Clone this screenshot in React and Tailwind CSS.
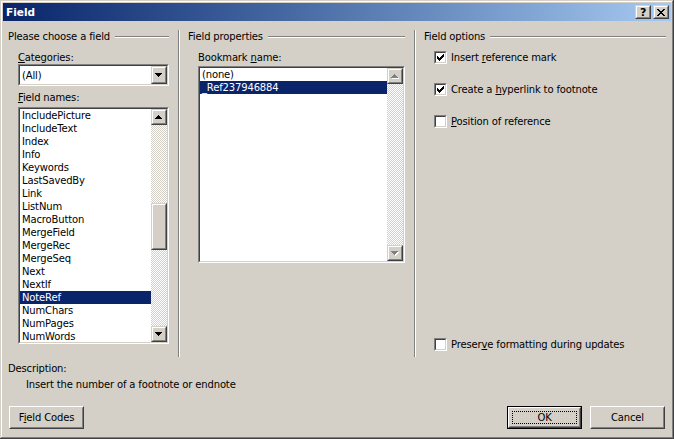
import React from "react";

function Tri({ down = false, disabled = false }) {
  const rows = [1, 3, 5, 7];
  return (
    <svg width="8" height="5" shapeRendering="crispEdges" className="block">
      {disabled &&
        rows.map((w, i) => (
          <rect key={"s" + i} x={(7 - w) / 2 + 1} y={(down ? 3 - i : i) + 1} width={w} height="1" fill="#ffffff" />
        ))}
      {rows.map((w, i) => (
        <rect key={i} x={(7 - w) / 2} y={down ? 3 - i : i} width={w} height="1" fill={disabled ? "#808080" : "#000000"} />
      ))}
    </svg>
  );
}

function RaisedSmall({ className = "", children }) {
  return (
    <div className={`bg-[#d4d0c8] border border-t-[#d4d0c8] border-l-[#d4d0c8] border-r-[#404040] border-b-[#404040] ${className}`}>
      <div className="w-full h-full border border-t-white border-l-white border-r-[#808080] border-b-[#808080] flex items-center justify-center">
        {children}
      </div>
    </div>
  );
}

function Sunken({ className = "", children }) {
  return (
    <div className={`border border-t-[#808080] border-l-[#808080] border-r-white border-b-white ${className}`}>
      <div className="w-full h-full border border-t-[#404040] border-l-[#404040] border-r-[#d4d0c8] border-b-[#d4d0c8] bg-white flex overflow-hidden">
        {children}
      </div>
    </div>
  );
}

function Track({ className = "" }) {
  return (
    <div className={`bg-[repeating-conic-gradient(#ffffff_0_25%,#d4d0c8_0_50%)] bg-[length:2px_2px] ${className}`} />
  );
}

function GroupHeader({ title, pl, pr }) {
  return (
    <div className={`flex items-center h-[13px] ${pl} ${pr}`}>
      <span className="whitespace-nowrap">{title}</span>
      <div className="flex-1 ml-[5px] h-[2px] border-t border-t-[#808080] border-b border-b-white" />
    </div>
  );
}

function Check({ checked }) {
  return (
    <div className="w-[13px] h-[13px] shrink-0 border border-t-[#808080] border-l-[#808080] border-r-white border-b-white">
      <div className="w-full h-full border border-t-[#404040] border-l-[#404040] border-r-[#d4d0c8] border-b-[#d4d0c8] bg-white flex items-center justify-center">
        {checked && (
          <svg width="7" height="7" shapeRendering="crispEdges" className="block">
            <path
              fill="#000"
              d="M6 0h1v3h-1zM5 1h1v3h-1zM4 2h1v3h-1zM3 3h1v3h-1zM2 4h1v3h-1zM1 3h1v3h-1zM0 2h1v3h-1z"
            />
          </svg>
        )}
      </div>
    </div>
  );
}

function PushButton({ children, isDefault = false, className = "" }) {
  const inner = (
    <div className="w-full h-full border border-t-white border-l-white border-r-[#404040] border-b-[#404040]">
      <div className="w-full h-full border border-t-[#d4d0c8] border-l-[#d4d0c8] border-r-[#808080] border-b-[#808080] flex items-center justify-center p-[2px]">
        {isDefault ? (
          <div className="w-full h-full border border-dotted border-black flex items-center justify-center">{children}</div>
        ) : (
          children
        )}
      </div>
    </div>
  );
  return (
    <div className={`w-[75px] h-[23px] bg-[#d4d0c8] ${isDefault ? "border border-black" : ""} ${className}`}>{inner}</div>
  );
}

const fieldNames = [
  "IncludePicture",
  "IncludeText",
  "Index",
  "Info",
  "Keywords",
  "LastSavedBy",
  "Link",
  "ListNum",
  "MacroButton",
  "MergeField",
  "MergeRec",
  "MergeSeq",
  "Next",
  "NextIf",
  "NoteRef",
  "NumChars",
  "NumPages",
  "NumWords",
];

function ListRow({ text, selected }) {
  return (
    <div
      className={`h-[13px] shrink-0 pl-[2px] whitespace-nowrap ${selected ? "bg-[#0a246a] text-white" : "text-black"}`}
    >
      {text}
    </div>
  );
}

export default function App() {
  return (
    <div className="w-[674px] h-[439px] bg-[#d4d0c8] p-[3px] flex flex-col text-[10px] leading-[13px] tracking-[-0.15px] text-black font-['DejaVu_Sans',sans-serif] shadow-[inset_-1px_-1px_#404040,inset_1px_1px_#d4d0c8,inset_-2px_-2px_#808080,inset_2px_2px_#ffffff] overflow-hidden">
      {/* Title bar */}
      <div className="h-[18px] shrink-0 flex items-center bg-linear-to-r from-[#0a246a] to-[#a6caf0] pl-[3px] pr-[2px]">
        <span className="text-white font-bold text-[10.5px] tracking-[0px]">Field</span>
        <div className="ml-auto flex gap-[2px]">
          <RaisedSmall className="w-[16px] h-[14px]">
            <span className="font-bold text-[11px] leading-[11px] text-black">?</span>
          </RaisedSmall>
          <RaisedSmall className="w-[16px] h-[14px]">
            <svg width="8" height="7" shapeRendering="crispEdges" className="block">
              <path
                fill="#000"
                d="M0 0h2v1h-2zM6 0h2v1h-2zM1 1h2v1h-2zM5 1h2v1h-2zM2 2h4v1h-4zM3 3h2v1h-2zM2 4h4v1h-4zM1 5h2v1h-2zM5 5h2v1h-2zM0 6h2v1h-2zM6 6h2v1h-2z"
              />
            </svg>
          </RaisedSmall>
        </div>
      </div>

      {/* Main area */}
      <div className="h-[337px] shrink-0 flex">
        {/* Left column */}
        <div className="w-[175px] pt-[9px] flex flex-col">
          <GroupHeader title="Please choose a field" pl="pl-[5px]" pr="pr-[9px]" />
          <div className="mt-[8px] pl-[15px] h-[13px]">
            <u>C</u>ategories:
          </div>
          <Sunken className="ml-[15px] w-[151px] h-[22px]">
            <div className="flex-1 pl-[2px] flex items-center">(All)</div>
            <RaisedSmall className="w-[16px] h-[18px]">
              <Tri down />
            </RaisedSmall>
          </Sunken>
          <div className="mt-[5px] pl-[15px] h-[13px]">
            <u>F</u>ield names:
          </div>
          <Sunken className="mt-[3px] ml-[15px] w-[151px] h-[237px]">
            <div className="flex-1 flex flex-col overflow-hidden">
              {fieldNames.map((n) => (
                <ListRow key={n} text={n} selected={n === "NoteRef"} />
              ))}
            </div>
            <div className="w-[16px] flex flex-col">
              <RaisedSmall className="w-[16px] h-[16px] shrink-0">
                <Tri />
              </RaisedSmall>
              <Track className="h-[78px] shrink-0" />
              <RaisedSmall className="w-[16px] h-[47px] shrink-0" />
              <Track className="flex-1" />
              <RaisedSmall className="w-[16px] h-[16px] shrink-0">
                <Tri down />
              </RaisedSmall>
            </div>
          </Sunken>
        </div>

        {/* Separator */}
        <div className="mt-[9px] h-[327px] w-[2px] border-l border-l-[#808080] border-r border-r-white" />

        {/* Middle column */}
        <div className="w-[234px] pt-[9px] flex flex-col">
          <GroupHeader title="Field properties" pl="pl-[8px]" pr="pr-[9px]" />
          <div className="mt-[8px] pl-[18px] h-[13px]">
            Bookmark <u>n</u>ame:
          </div>
          <Sunken className="mt-[2px] ml-[18px] w-[207px] h-[197px]">
            <div className="flex-1 flex flex-col overflow-hidden">
              <ListRow text="(none)" />
              <ListRow text="_Ref237946884" selected />
            </div>
            <div className="w-[16px] flex flex-col">
              <RaisedSmall className="w-[16px] h-[16px] shrink-0">
                <Tri disabled />
              </RaisedSmall>
              <Track className="flex-1" />
              <RaisedSmall className="w-[16px] h-[16px] shrink-0">
                <Tri down disabled />
              </RaisedSmall>
            </div>
          </Sunken>
        </div>

        {/* Separator */}
        <div className="mt-[9px] h-[327px] w-[2px] border-l border-l-[#808080] border-r border-r-white" />

        {/* Right column */}
        <div className="flex-1 pt-[9px] flex flex-col">
          <GroupHeader title="Field options" pl="pl-[8px]" pr="pr-[5px]" />
          <div className="mt-[8px] pl-[18px] h-[13px] flex items-center gap-[4px]">
            <Check checked />
            <span>
              Insert <u>r</u>eference mark
            </span>
          </div>
          <div className="mt-[19px] pl-[18px] h-[13px] flex items-center gap-[4px]">
            <Check checked />
            <span>
              Create a <u>h</u>yperlink to footnote
            </span>
          </div>
          <div className="mt-[19px] pl-[18px] h-[13px] flex items-center gap-[4px]">
            <Check />
            <span>
              <u>P</u>osition of reference
            </span>
          </div>
          <div className="mt-[210px] pl-[18px] h-[13px] flex items-center gap-[4px]">
            <Check />
            <span>
              Preser<u>v</u>e formatting during updates
            </span>
          </div>
        </div>
      </div>

      {/* Description */}
      <div className="mt-[4px] pl-[5px] h-[13px]">Description:</div>
      <div className="mt-[3px] pl-[23px] h-[13px]">Insert the number of a footnote or endnote</div>

      {/* Buttons */}
      <div className="mt-[15px] flex pl-[6px] pr-[6px]">
        <PushButton>
          <span>
            F<u>i</u>eld Codes
          </span>
        </PushButton>
        <PushButton isDefault className="ml-auto">
          OK
        </PushButton>
        <PushButton className="ml-[8px]">Cancel</PushButton>
      </div>
    </div>
  );
}
